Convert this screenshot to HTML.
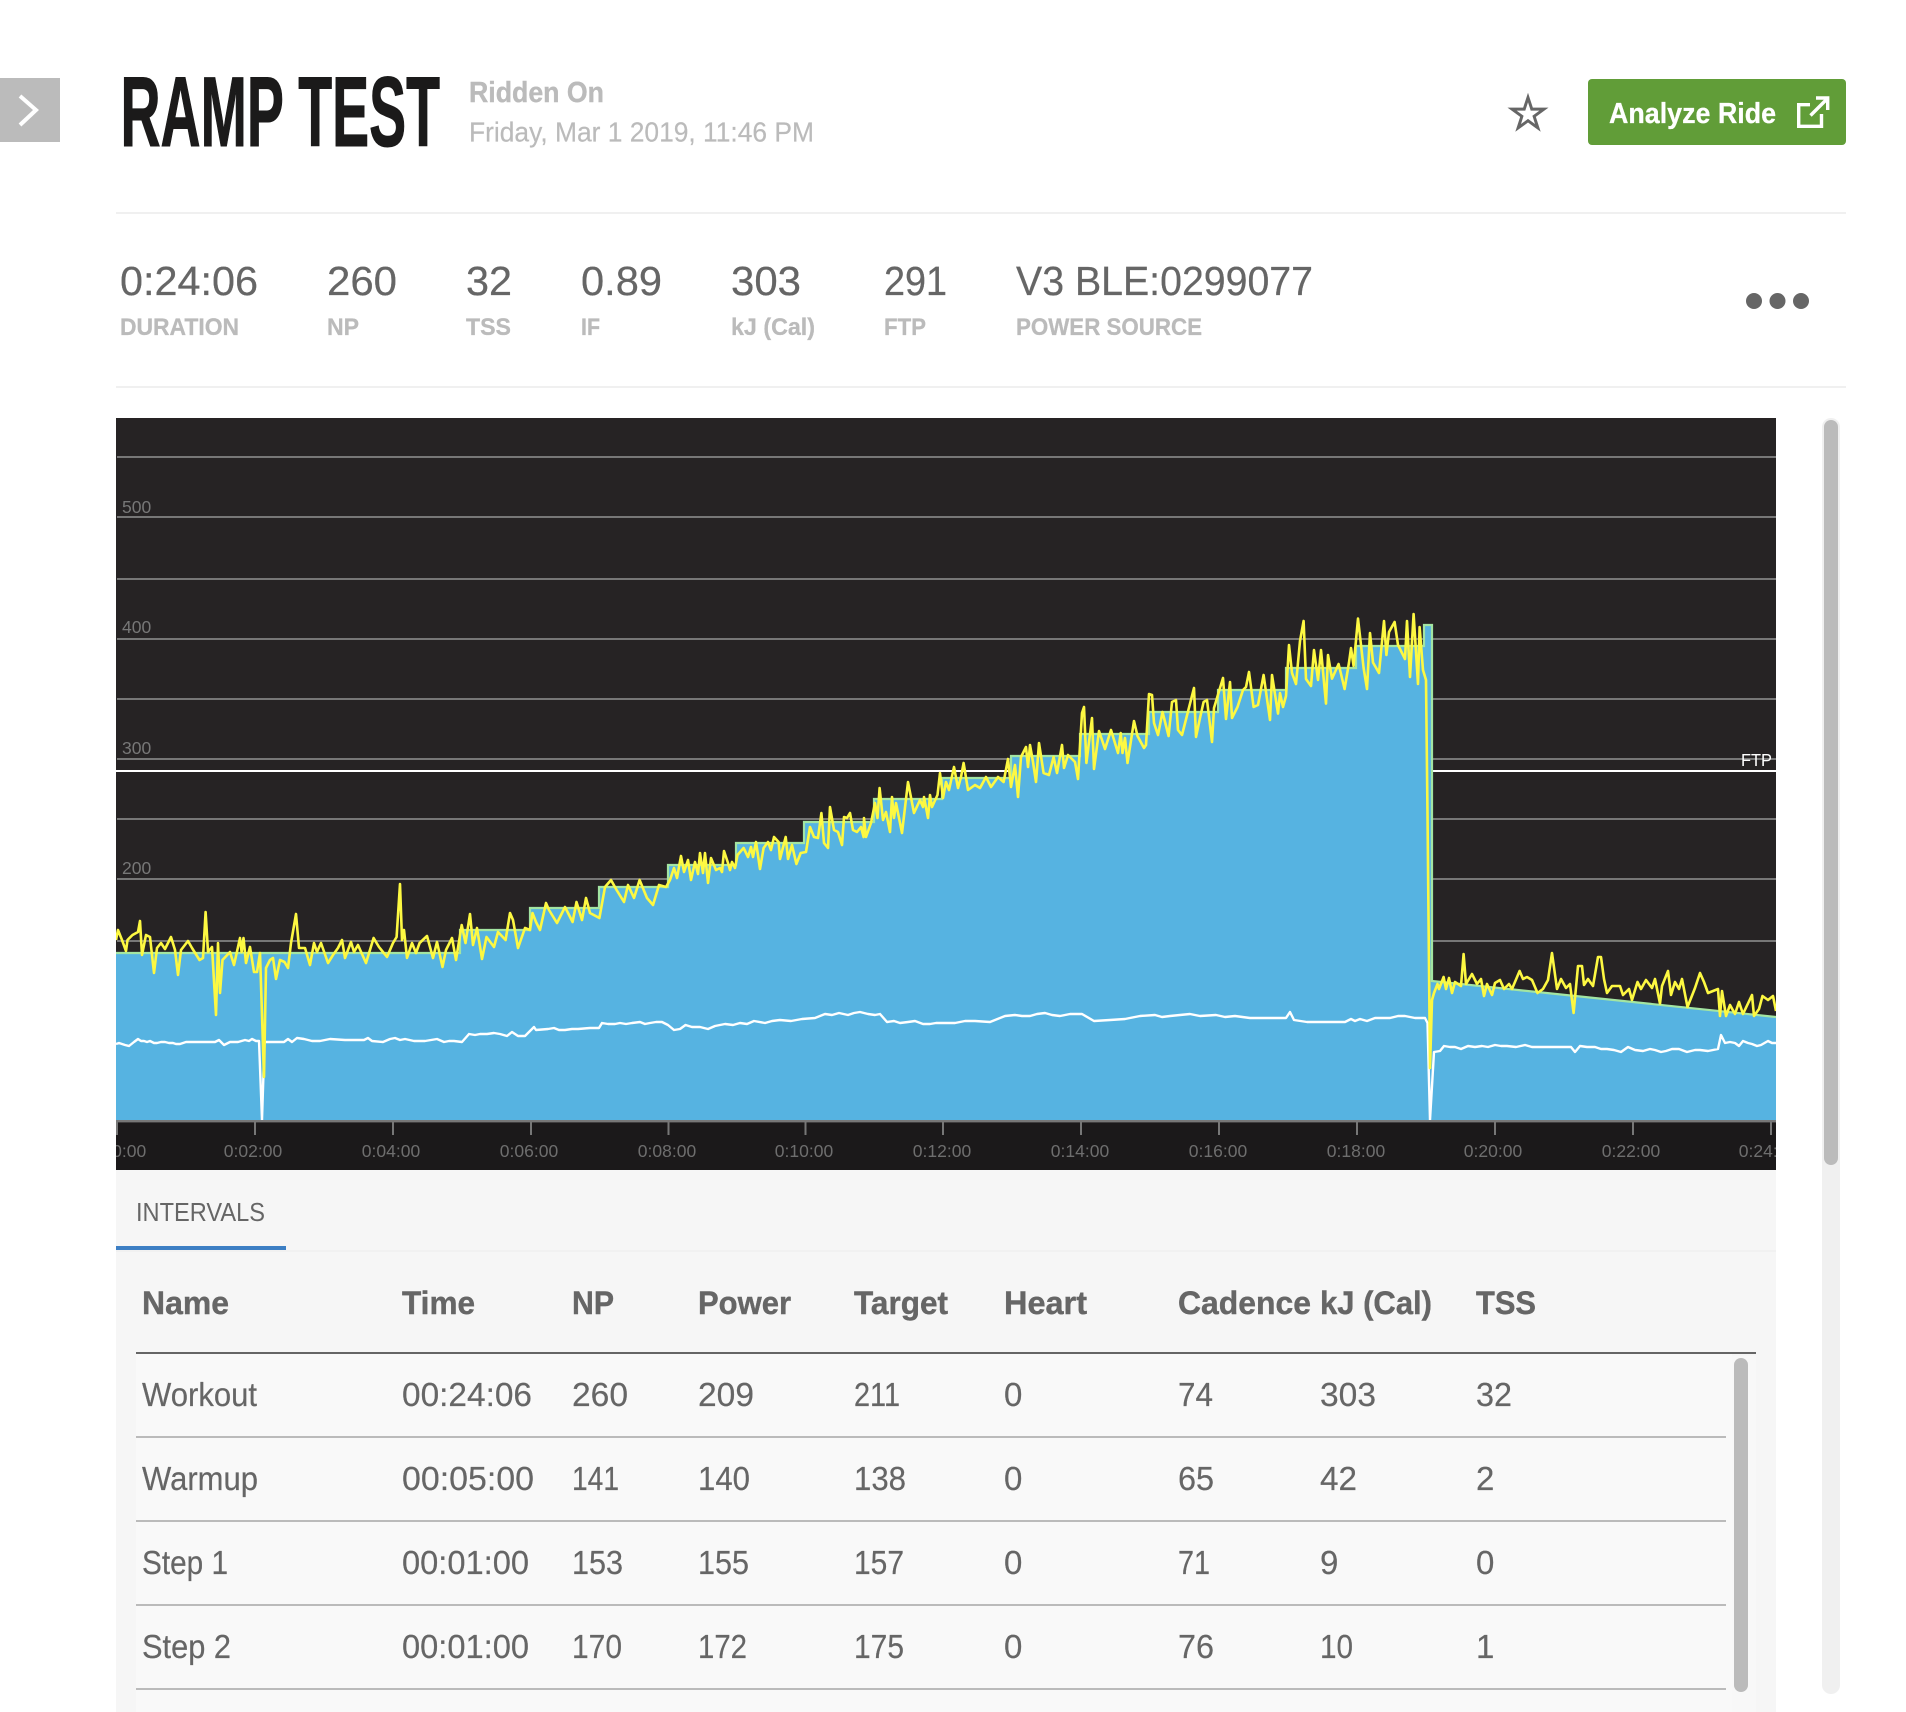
<!DOCTYPE html>
<html lang="en"><head><meta charset="utf-8"><title>Ramp Test</title>
<style>
html,body{margin:0;padding:0;background:#fff;width:1906px;height:1712px;overflow:hidden}
svg{display:block}
text{font-family:"Liberation Sans",Arial,sans-serif}
.stat{font-size:41px;fill:#666;stroke:#666;stroke-width:.25}
.lab{font-size:24px;font-weight:700;fill:#bbb;stroke:#bbb;stroke-width:.3}
.hd{font-size:32px;font-weight:700;fill:#666;stroke:#666;stroke-width:.4}
.td{font-size:33px;fill:#666;stroke:#666;stroke-width:.2}
.ax{font-size:17.5px;fill:#6e6e6e}
.yl{font-size:17.5px;fill:#777}
</style></head><body>
<svg xmlns="http://www.w3.org/2000/svg" width="1906" height="1712" viewBox="0 0 1906 1712">
<defs><clipPath id="c"><rect x="116" y="418" width="1660" height="752"/></clipPath></defs>
<rect x="0" y="78" width="60" height="64" fill="#bbb"/>
<polyline points="20,96 36,110 20,125" fill="none" stroke="#fff" stroke-width="4"/>
<text x="120.5" y="146" font-size="99" font-weight="700" fill="#1b1a1a" stroke="#1b1a1a" stroke-width="1" textLength="319.5" lengthAdjust="spacingAndGlyphs">RAMP TEST</text>
<text x="469" y="102" font-size="29" font-weight="700" fill="#bbb" stroke="#bbb" stroke-width=".4" textLength="135" lengthAdjust="spacingAndGlyphs">Ridden On</text>
<text x="469" y="141.5" font-size="28" fill="#bbb" stroke="#bbb" stroke-width=".2" textLength="345" lengthAdjust="spacingAndGlyphs">Friday, Mar 1 2019, 11:46 PM</text>
<path fill-rule="evenodd" fill="#666" d="M1528 92.7L1532.85 107.6L1548.5 107.6L1535.85 116.85L1540.7 131.8L1528 122.55L1515.3 131.8L1520.15 116.85L1507.5 107.6L1523.15 107.6ZM1528 102.3L1525.3 110.6L1516.6 110.6L1523.6 115.7L1521 124L1528 118.9L1535 124L1532.4 115.7L1539.4 110.6L1530.7 110.6Z"/>
<rect x="1588" y="79" width="258" height="66" rx="4" fill="#619d38"/>
<text x="1609" y="123" font-size="29" font-weight="700" fill="#fff" stroke="#fff" stroke-width=".3" textLength="167" lengthAdjust="spacingAndGlyphs">Analyze Ride</text>
<path d="M1810 104.7H1798.7V126.3H1821.5V114M1810.5 115.5L1827 99M1816 98H1827.7V110" fill="none" stroke="#fff" stroke-width="3.4"/>
<rect x="116" y="212" width="1730" height="2" fill="#f0f0f0"/>
<rect x="116" y="386" width="1730" height="2" fill="#f0f0f0"/>

<text class="stat" x="120" y="295" textLength="138" lengthAdjust="spacingAndGlyphs">0:24:06</text>
<text class="stat" x="327" y="295" textLength="70" lengthAdjust="spacingAndGlyphs">260</text>
<text class="stat" x="466" y="295" textLength="46" lengthAdjust="spacingAndGlyphs">32</text>
<text class="stat" x="581" y="295" textLength="81" lengthAdjust="spacingAndGlyphs">0.89</text>
<text class="stat" x="731" y="295" textLength="70" lengthAdjust="spacingAndGlyphs">303</text>
<text class="stat" x="884" y="295" textLength="63" lengthAdjust="spacingAndGlyphs">291</text>
<text class="stat" x="1016" y="295" textLength="297" lengthAdjust="spacingAndGlyphs">V3 BLE:0299077</text>
<text class="lab" x="120" y="335" textLength="119" lengthAdjust="spacingAndGlyphs">DURATION</text>
<text class="lab" x="327" y="335" textLength="32" lengthAdjust="spacingAndGlyphs">NP</text>
<text class="lab" x="466" y="335" textLength="45" lengthAdjust="spacingAndGlyphs">TSS</text>
<text class="lab" x="581" y="335" textLength="19" lengthAdjust="spacingAndGlyphs">IF</text>
<text class="lab" x="731" y="335" textLength="84" lengthAdjust="spacingAndGlyphs">kJ (Cal)</text>
<text class="lab" x="884" y="335" textLength="42" lengthAdjust="spacingAndGlyphs">FTP</text>
<text class="lab" x="1016" y="335" textLength="186" lengthAdjust="spacingAndGlyphs">POWER SOURCE</text>
<circle cx="1754" cy="301" r="8" fill="#666"/><circle cx="1777.5" cy="301" r="8" fill="#666"/><circle cx="1801" cy="301" r="8" fill="#666"/>

<rect x="1822" y="418" width="18" height="1276" rx="9" fill="#f0f0f0"/>
<rect x="1824" y="420" width="14" height="745" rx="7" fill="#bbb"/>

<g clip-path="url(#c)">
<rect x="116" y="418" width="1660" height="702" fill="#262324"/>
<rect x="116" y="1120" width="1660" height="50" fill="#1b191a"/>
<g fill="#777">
<rect x="117" y="456" width="1659" height="2"/><rect x="117" y="516" width="1659" height="2"/><rect x="117" y="578" width="1659" height="2"/><rect x="117" y="638" width="1659" height="2"/><rect x="117" y="698" width="1659" height="2"/><rect x="117" y="758" width="1659" height="2"/><rect x="117" y="818" width="1659" height="2"/><rect x="117" y="878" width="1659" height="2"/><rect x="117" y="940" width="1659" height="2"/>
</g>
<rect x="116" y="770" width="1660" height="2" fill="#fff"/>
<text class="yl" x="122" y="513">500</text><text class="yl" x="122" y="633">400</text><text class="yl" x="122" y="754">300</text><text class="yl" x="122" y="874">200</text>
<text x="1741" y="766" font-size="17.5" fill="#fff" textLength="31" lengthAdjust="spacingAndGlyphs">FTP</text>
<path fill="#56b3e1" d="M116 1120V953H460V930H530V908H599V887H668V865H736V843H804V822H874V799H942V778H1011V756H1080V734H1149V712H1218V690H1286V668H1356V646H1424V625H1432V981L1776 1017V1120Z"/>
<path fill="none" stroke="#a3e5a2" stroke-width="2.2" d="M116 953H460V930H530V908H599V887H668V865H736V843H804V822H874V799H942V778H1011V756H1080V734H1149V712H1218V690H1286V668H1356V646H1424V625H1432V981L1776 1017"/>
<polyline fill="none" stroke="#fff" stroke-width="2.4" stroke-linejoin="round" points="116,1044 119,1043 122,1044 125,1045 129,1046 134,1042 138,1039 141,1041 144,1041 147,1042 150,1041 154,1043 157,1043 161,1042 165,1042 169,1043 173,1043 176,1044 180,1044 186,1042 192,1042 205,1042 215,1042 219,1040 224,1045 230,1042 238,1042 245,1040 249,1041 252,1039 256,1041 259,1041 262,1120 264.5,1042 275,1042 284,1042 288,1039 292,1042 297,1038 304,1039 312,1041 320,1041 325,1040 330,1039 345,1040 364,1040 368,1038 372,1041 383,1042 390,1039 395,1038 400,1040 405,1039 414,1041 420,1041 425,1041 431,1040 437,1039 444,1042 449,1041 454,1041 462,1042 469,1034 475,1035 480,1034 487,1034 494,1033 500,1034 507,1036 512,1032 518,1036 525,1036 534,1027 536,1030 548,1029 554,1028 559,1030 565,1030 572,1029 578,1029 590,1028 599,1028 602,1023 608,1024 615,1024 620,1023 626,1024 632,1023 640,1022 645,1024 650,1023 656,1022 662,1022 668,1025 674,1030 680,1029 685.5,1025 692,1027 700,1027 708,1029 715,1026 725,1024 733,1025 740,1023 747,1024 754,1021 765,1023 772,1021 780,1020 791,1021 802,1019 815,1018 825,1014 832,1015 839,1013 848,1015 854,1013 860,1012 868,1014 875,1015 880,1014 887,1022 894,1021 900,1023 908,1022 915,1021 923,1024 930,1024 936,1023 942,1023 955,1023 965,1021 975,1021 990,1022 1005,1016 1015,1015 1022,1016 1030,1016 1037,1014 1045,1013 1052,1015 1060,1016 1070,1014 1082,1014 1094,1021 1110,1020 1125,1019 1140,1016 1155,1015 1162,1017 1170,1016 1180,1015 1190,1014 1200,1016 1216,1015 1225,1017 1235,1016 1250,1018 1270,1018 1286,1018 1290,1012 1294,1020 1307,1022 1330,1022 1345,1022 1351,1019 1355,1021 1360,1019 1367,1021 1375,1018 1390,1018 1398,1016 1405,1016 1415,1018 1425,1018 1427.5,1023 1430,1120 1434,1052 1440,1051 1444,1046 1450,1047 1455,1047 1461,1049 1468,1046 1475,1047 1482,1046 1488,1047 1495,1045 1501,1046 1507,1046 1516,1047 1525,1045 1532,1047 1540,1047 1555,1047 1571,1047 1575,1052 1580,1046 1587,1047 1595,1047 1601,1049 1607,1049 1614,1050 1621,1052 1628,1047 1635,1050 1643,1051 1650,1049 1655,1050 1661,1052 1666,1051 1672,1049 1679,1049 1687,1052 1695,1050 1700,1050 1708,1051 1718,1049 1721,1035 1725,1043 1730,1042 1735,1043 1739,1046 1743,1041 1748,1043 1752,1044 1757,1046 1761,1045 1768,1041 1772,1043 1776,1043"/>
<polyline fill="none" stroke="#fdf842" stroke-width="2.6" stroke-linejoin="round" points="116,940 118,930 122,940 126,951 127.5,940 132.5,935 138,932 140,921 142,955 146,935 150,937 154,973 157,948 161,943 165,949 171,937 175,950 178,975 181,950 188,941 192,948 199.5,960 203,958 205.6,912 208,952 212,947 216,1015 218,943 220,993 222.5,960 230,952 234,965 240,938 241.6,952 243.5,938 246,963 250,947 254,972 257,972 260,953 264,1077 266,968 270,960 273,958 276,979 280,960 284.5,962 288,968 291,943 296,914 299,948 305,948 310,965 314,943 317,952 321,943 328,963 333,955 338,948 342,940 345,958 351,942 354,952 358,945 366,963 373.6,938 379,947 387,957 393,943 396.6,937 400,884 402,940 404,930 407,958 412,943 416,953 419.6,943 427,936 433,958 437,942 442.5,967 446,950 452,938 456,960 461.7,925 465.5,943 470,914 473,945 477,928 482,959 486.5,937 494,947 498,932 505.6,940 510,913 513,920 518,948 525,928 530,930 532.5,913 536,922 540,930 546,903 549,910 557,923 565,907 572.6,922 576.5,902 582,920 586,898 590,913 599.4,918 605,887 611,880 616.6,890 624,902 628,885 634,898 639.6,880 647,898 653,905 659,885 666,887 670,880 674,868 677,878 681,856 684,872 688,860 691,880 695,862 698,874 700,853 703,873 705,853 708,883 711,858 716,870 720,868 722,872 724,851 728,863 730,870 732,862 735,868 737.5,855 743.6,848 748,857 751,847 753,857 756,842 760,869 763.6,848 768,842 771,850 774,837 778.6,842 780,859 785.7,837 788,859 792,845 796.4,864 800.7,853 806,852 810,827 814,837 818,838 821.4,813 824,843 828,848 830,807 834,830 838,832 842,845 844,817 847,818 850,813 853,830 857,832 861,827 863.6,837 864,818 866,837 871,823 875,803 877.5,818 879.6,788 883,820 886,812 890,832 892,797 894,818 896,803 902,833 908,782 914,813 920,800 923,807 924,797 928,818 930,795 932,807 937.5,795 940,773 943,798 946,782 949,790 954,767 958,788 961,777 963.6,763 968,790 975,785 980,788 986,777 991,787 998,777 1003.6,782 1008,759 1011,787 1015,765 1018,797 1021,757 1026,747 1028,767 1030,745 1033,762 1036,782 1039,743 1043.6,773 1049,775 1053.6,757 1057,773 1062,745 1064,768 1068,755 1075,762 1078,779 1082,713 1084,707 1086.4,763 1092,718 1094,769 1099,731 1105,749 1111,730 1118,753 1120.7,733 1122.5,753 1125,738 1127.5,763 1134,721 1137.5,736 1144,748 1146,745 1149,694 1152,695 1154,723 1158,735 1162.5,712 1168.6,736 1172,702 1176,700 1178,730 1182,735 1194,688 1196,737 1200,718 1203.6,702 1207,700 1212,742 1214,708 1223,678 1226,719 1230,682 1232,718 1237.5,707 1243,690 1246,687 1249,672 1253.6,707 1258,705 1263.6,675 1270,720 1272,675 1278,713.6 1280,693 1283,707 1286,696 1289,645 1292,673 1296,684 1300,641 1303.6,621 1306,679 1311,686 1314,650 1318,680 1321,650 1326,703.6 1328,655 1332,678.6 1338.6,664 1344.6,689 1349,662.5 1351,648 1353.6,666 1358,618.6 1363.6,668 1367,689 1370,633 1373,662.5 1379,673 1384,621 1386.4,655 1389,632 1394.6,622 1398,645 1405,659 1407,621 1410,677 1413.6,614 1418,684 1419.6,627 1423,670 1426,680 1427.5,814 1430,1068 1432,1000 1434,993 1437.5,984 1439,989 1443.6,977 1446,989 1449,978 1452,993 1455,982 1461,986 1463.6,954 1466,984 1472,974 1477,984 1481,979 1484,996 1487,984 1492,995 1495,983 1500,980 1504,989 1509,984 1512,989 1519.6,971 1523,979 1527,977 1532,980 1537.5,993 1543,989 1548,980 1552,953 1557,989 1561,979 1566,988 1570,984 1573.6,1013 1578,966 1582,966 1584,985 1588,979 1593,986 1598,957 1601,957 1604,979 1607,993 1612,986 1620,986 1623,995 1629,989 1632,1000 1637.5,982 1641,989 1646,980 1652,988 1655,979 1660,1003.6 1662,986 1668,971 1671,995 1675,982 1679,989 1682,979 1687.5,1007 1695,988 1700,973 1704,982 1708,993 1718,989 1720,1016 1722,991 1726,1016 1730,1005 1735,1014 1739,1002 1743,1014 1752,995 1754,1016 1759,1009 1762.5,996 1768,1000 1773,996 1776,1011"/>
<rect x="116" y="1120" width="1660" height="2.4" fill="#777"/>
<g fill="#777"><rect x="116" y="1120" width="2" height="15"/><rect x="254" y="1120" width="2" height="15"/><rect x="392" y="1120" width="2" height="15"/><rect x="530" y="1120" width="2" height="15"/><rect x="667.5" y="1120" width="2" height="15"/><rect x="804.5" y="1120" width="2" height="15"/><rect x="942" y="1120" width="2" height="15"/><rect x="1080" y="1120" width="2" height="15"/><rect x="1218" y="1120" width="2" height="15"/><rect x="1356" y="1120" width="2" height="15"/><rect x="1494" y="1120" width="2" height="15"/><rect x="1632" y="1120" width="2" height="15"/><rect x="1770" y="1120" width="2" height="15"/></g>
<g text-anchor="middle">
<text class="ax" x="117" y="1157">0:00:00</text><text class="ax" x="253" y="1157">0:02:00</text><text class="ax" x="391" y="1157">0:04:00</text><text class="ax" x="529" y="1157">0:06:00</text><text class="ax" x="667" y="1157">0:08:00</text><text class="ax" x="804" y="1157">0:10:00</text><text class="ax" x="942" y="1157">0:12:00</text><text class="ax" x="1080" y="1157">0:14:00</text><text class="ax" x="1218" y="1157">0:16:00</text><text class="ax" x="1356" y="1157">0:18:00</text><text class="ax" x="1493" y="1157">0:20:00</text><text class="ax" x="1631" y="1157">0:22:00</text><text class="ax" x="1768" y="1157">0:24:00</text>
</g>
</g>

<rect x="116" y="1170" width="1660" height="542" fill="#f6f6f6"/>
<text x="136" y="1221" font-size="26" fill="#666" textLength="129" lengthAdjust="spacingAndGlyphs">INTERVALS</text>
<rect x="116" y="1250" width="1660" height="2" fill="#f1f1f1"/>
<rect x="116" y="1246" width="170" height="4" fill="#3d7fc4"/>
<rect x="136" y="1354" width="1596" height="358" fill="#f9f9f9"/>
<rect x="1732" y="1356" width="24" height="356" fill="#f8f8f8"/>
<rect x="1734" y="1358" width="14" height="334" rx="7" fill="#bbb"/>

<text class="hd" x="142" y="1314" textLength="87" lengthAdjust="spacingAndGlyphs">Name</text>
<text class="hd" x="402" y="1314" textLength="73" lengthAdjust="spacingAndGlyphs">Time</text>
<text class="hd" x="572" y="1314" textLength="42" lengthAdjust="spacingAndGlyphs">NP</text>
<text class="hd" x="698" y="1314" textLength="93" lengthAdjust="spacingAndGlyphs">Power</text>
<text class="hd" x="854" y="1314" textLength="94" lengthAdjust="spacingAndGlyphs">Target</text>
<text class="hd" x="1004" y="1314" textLength="83" lengthAdjust="spacingAndGlyphs">Heart</text>
<text class="hd" x="1178" y="1314" textLength="133" lengthAdjust="spacingAndGlyphs">Cadence</text>
<text class="hd" x="1320" y="1314" textLength="112" lengthAdjust="spacingAndGlyphs">kJ (Cal)</text>
<text class="hd" x="1476" y="1314" textLength="60" lengthAdjust="spacingAndGlyphs">TSS</text>
<rect x="136" y="1352" width="1620" height="2" fill="#666"/>

<text class="td" x="142" y="1406" textLength="115" lengthAdjust="spacingAndGlyphs">Workout</text>
<text class="td" x="402" y="1406" textLength="130" lengthAdjust="spacingAndGlyphs">00:24:06</text>
<text class="td" x="572" y="1406" textLength="56" lengthAdjust="spacingAndGlyphs">260</text>
<text class="td" x="698" y="1406" textLength="56" lengthAdjust="spacingAndGlyphs">209</text>
<text class="td" x="854" y="1406" textLength="46" lengthAdjust="spacingAndGlyphs">211</text>
<text class="td" x="1004" y="1406">0</text>
<text class="td" x="1178" y="1406" textLength="35" lengthAdjust="spacingAndGlyphs">74</text>
<text class="td" x="1320" y="1406" textLength="56" lengthAdjust="spacingAndGlyphs">303</text>
<text class="td" x="1476" y="1406" textLength="36" lengthAdjust="spacingAndGlyphs">32</text>
<rect x="136" y="1436" width="1590" height="2" fill="#bbb"/>

<text class="td" x="142" y="1490" textLength="116" lengthAdjust="spacingAndGlyphs">Warmup</text>
<text class="td" x="402" y="1490" textLength="132" lengthAdjust="spacingAndGlyphs">00:05:00</text>
<text class="td" x="572" y="1490" textLength="47" lengthAdjust="spacingAndGlyphs">141</text>
<text class="td" x="698" y="1490" textLength="52" lengthAdjust="spacingAndGlyphs">140</text>
<text class="td" x="854" y="1490" textLength="52" lengthAdjust="spacingAndGlyphs">138</text>
<text class="td" x="1004" y="1490">0</text>
<text class="td" x="1178" y="1490" textLength="36" lengthAdjust="spacingAndGlyphs">65</text>
<text class="td" x="1320" y="1490" textLength="37" lengthAdjust="spacingAndGlyphs">42</text>
<text class="td" x="1476" y="1490">2</text>
<rect x="136" y="1520" width="1590" height="2" fill="#bbb"/>

<text class="td" x="142" y="1574" textLength="86" lengthAdjust="spacingAndGlyphs">Step 1</text>
<text class="td" x="402" y="1574" textLength="127" lengthAdjust="spacingAndGlyphs">00:01:00</text>
<text class="td" x="572" y="1574" textLength="51" lengthAdjust="spacingAndGlyphs">153</text>
<text class="td" x="698" y="1574" textLength="51" lengthAdjust="spacingAndGlyphs">155</text>
<text class="td" x="854" y="1574" textLength="50" lengthAdjust="spacingAndGlyphs">157</text>
<text class="td" x="1004" y="1574">0</text>
<text class="td" x="1178" y="1574" textLength="32" lengthAdjust="spacingAndGlyphs">71</text>
<text class="td" x="1320" y="1574">9</text>
<text class="td" x="1476" y="1574">0</text>
<rect x="136" y="1604" width="1590" height="2" fill="#bbb"/>

<text class="td" x="142" y="1658" textLength="89" lengthAdjust="spacingAndGlyphs">Step 2</text>
<text class="td" x="402" y="1658" textLength="127" lengthAdjust="spacingAndGlyphs">00:01:00</text>
<text class="td" x="572" y="1658" textLength="50" lengthAdjust="spacingAndGlyphs">170</text>
<text class="td" x="698" y="1658" textLength="49" lengthAdjust="spacingAndGlyphs">172</text>
<text class="td" x="854" y="1658" textLength="50" lengthAdjust="spacingAndGlyphs">175</text>
<text class="td" x="1004" y="1658">0</text>
<text class="td" x="1178" y="1658" textLength="36" lengthAdjust="spacingAndGlyphs">76</text>
<text class="td" x="1320" y="1658" textLength="33" lengthAdjust="spacingAndGlyphs">10</text>
<text class="td" x="1476" y="1658">1</text>
<rect x="136" y="1688" width="1590" height="2" fill="#bbb"/>
</svg>
</body></html>
